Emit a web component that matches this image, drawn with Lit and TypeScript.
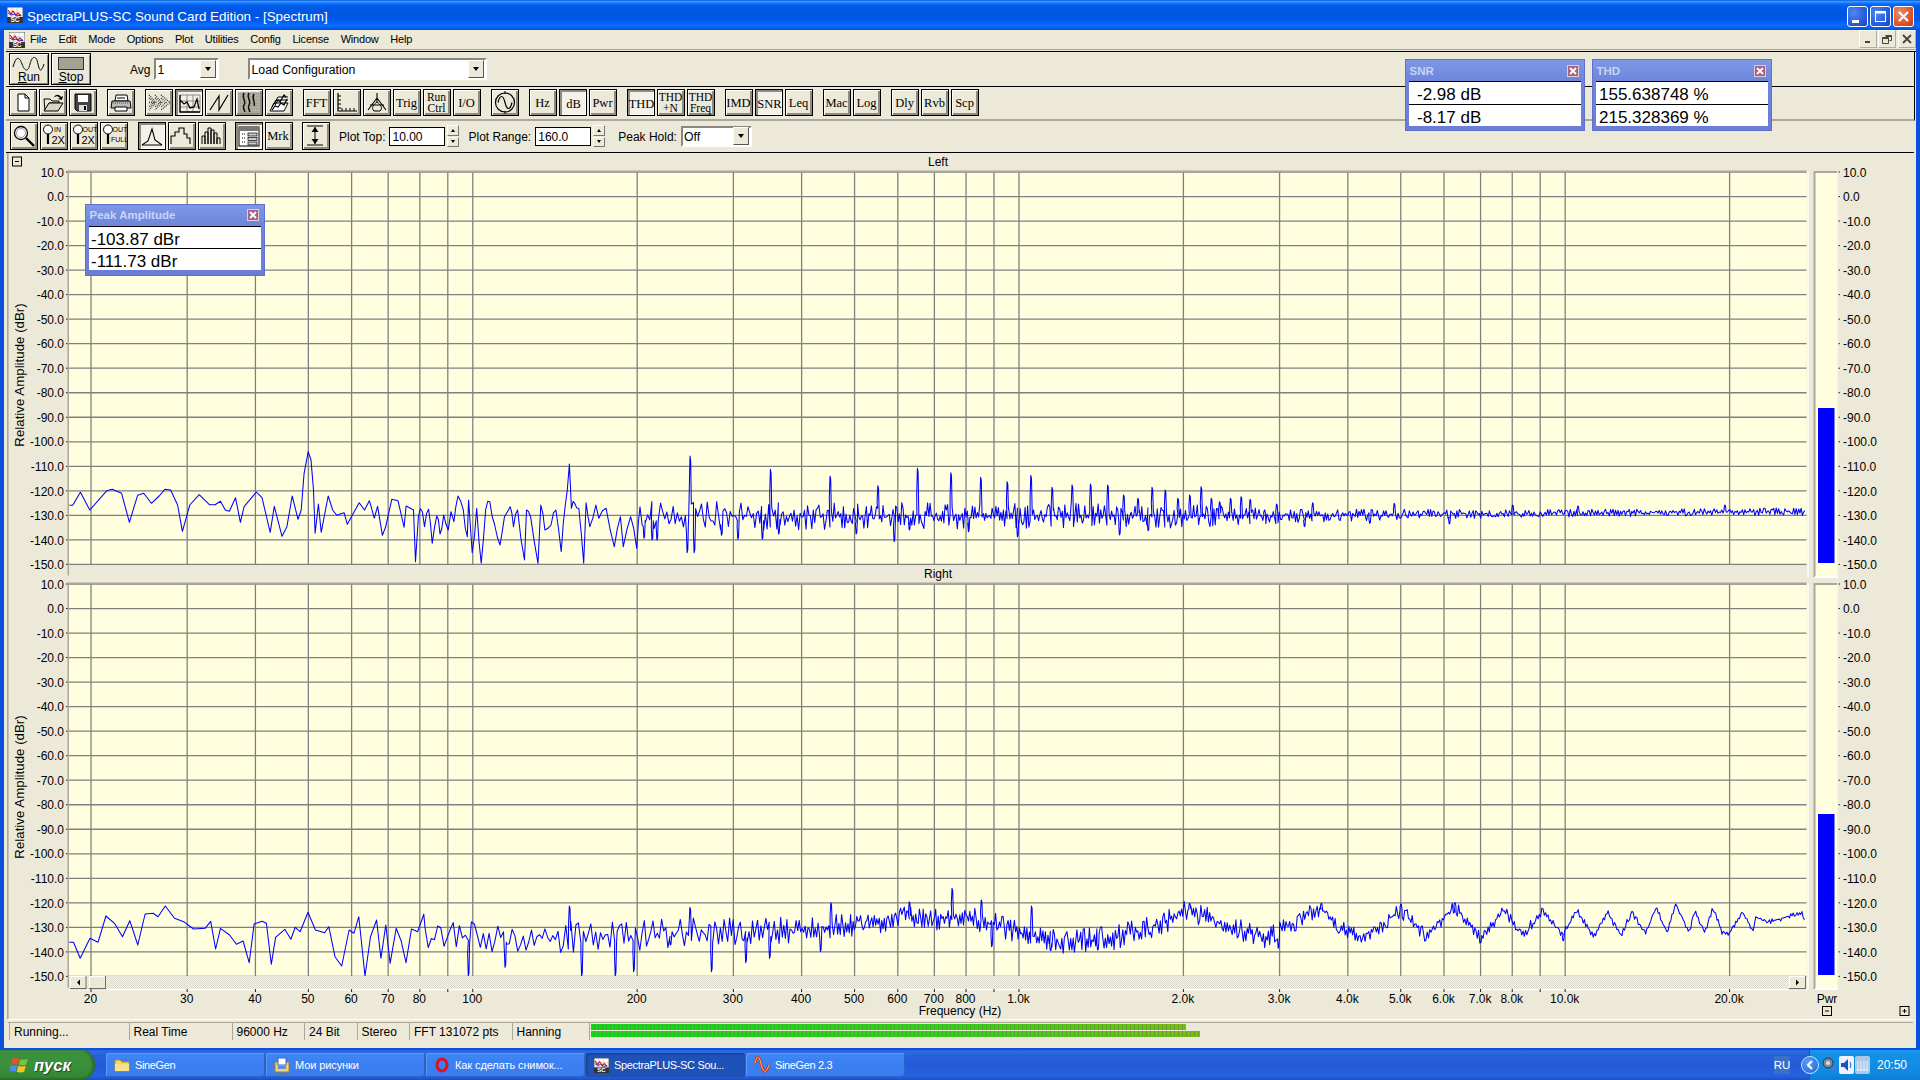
import { LitElement, html, css, svg } from "lit";
import { customElement } from "lit/decorators.js";

function rng(seed: number) {
  let s = seed;
  return () => {
    s = (s * 16807) % 2147483647;
    return (s - 1) / 2147483646;
  };
}
function interp(tbl: number[][], x: number) {
  if (x <= tbl[0][0]) return tbl[0][1];
  for (let i = 1; i < tbl.length; i++) {
    if (x <= tbl[i][0]) {
      const [a, b] = tbl[i - 1];
      const [c, d] = tbl[i];
      return b + ((d - b) * (x - a)) / (c - a);
    }
  }
  return tbl[tbl.length - 1][1];
}

const FX = (f: number) => 91 + 546.2 * Math.log10(f / 20);
const PLOT_L = 69;
const PLOT_R = 1806.5;
const STEP = 2.4525;
const T1 = 172;
const T2 = 584;

const leftLow = [[170,226],[178,226],[197,187],[220,240],[262,182],[275,178],[298,190],[317,277],[337,196],[352,190],[371,220],[390,198],[404,178],[418,180],[435,225],[447,304],[465,225],[488,194],[513,224],[527,224],[540,214],[552,240],[562,244],[577,203],[589,277],[598,230],[628,186],[642,203],[662,307],[672,229],[691,319],[703,290],[716,198],[730,268],[738,240],[745,130],[755,65],[762,90],[768,180],[772,310],[780,222],[787,307],[804,198],[815,240],[825,256],[843,248],[851,283],[880,218],[893,240],[905,212],[917,264],[925,229],[937,316],[945,290],[960,208],[975,212],[990,292],[995,228],[1013,240],[1018,395],[1025,260],[1035,245],[1040,290],[1050,238],[1059,340],[1070,258],[1078,312],[1087,255],[1098,300],[1105,245],[1112,275],[1122,198],[1135,240],[1145,320],[1148,210],[1157,368],[1168,235],[1179,400],[1190,238],[1200,215],[1212,285],[1225,345],[1236,260],[1250,230],[1258,290],[1268,240],[1285,390],[1290,240],[1300,260],[1318,400],[1325,225],[1335,300],[1350,285],[1362,240],[1375,365],[1385,225],[1395,102],[1400,235],[1408,220],[1418,235],[1430,400],[1436,218],[1445,290],[1460,225],[1467,265],[1485,235],[1505,350],[1520,260],[1527,350],[1545,260],[1560,355],[1568,230]];

const leftSpikes: number[][] = [
  ...[[123,78],[320,118],[466,138],[583,167],[680,115],[762,128],[835,142],[900,155],[958,136],[1010,172],[1059,165],[1104,162],[1146,165],[1185,195],[1220,205],[1255,172],[1287,180],[1318,205],[1347,195],[1375,170],[1400,205],[1420,215],[1447,205],[1473,200],[1495,208],[1530,240],[1560,222],[116,368],[133,368],[240,328],[300,328],[340,312],[530,312],[623,335],[925,320],[10,325],[30,330],[42,330],[200,316],[660,300],[805,305],[1175,315],[1245,302]].map(([x, y]) => [640 + x / 2.45, 430 + y / 3]),
  ...[[80,218],[280,220],[570,225],[1090,225],[60,290],[415,282],[220,280],[730,228]].map(([x, y]) => [1280 + x / 2.45, 430 + y / 3]),
];

const rightLow = [[113,187],[120,187],[131,235],[147,175],[160,187],[173,108],[187,130],[200,170],[212,122],[225,195],[237,102],[250,100],[258,110],[270,78],[285,115],[300,125],[316,147],[335,145],[344,124],[352,207],[360,145],[375,165],[386,193],[397,183],[407,248],[415,132],[428,124],[435,130],[443,253],[450,172],[465,148],[475,178],[482,142],[490,155],[503,97],[515,150],[530,158],[537,140],[547,230],[558,258],[570,150],[578,160],[586,110],[596,288],[605,170],[615,120],[622,235],[630,135],[637,250],[647,145],[655,182],[663,248],[672,147],[682,155],[692,103]];

const rightCenter = [[424,925],[428,935],[612,937],[796,930],[918,918],[960,917],[990,923],[1021,933],[1052,942],[1113,938],[1162,923],[1190,910],[1217,923],[1266,938],[1321,908],[1340,928],[1364,938],[1401,910],[1425,935],[1455,907],[1480,938],[1504,910],[1523,935],[1543,910],[1563,935],[1577,910],[1594,937],[1607,912],[1621,935],[1632,912],[1645,933],[1656,907],[1667,932],[1676,905],[1689,932],[1695,912],[1705,933],[1713,908],[1722,932],[1729,933],[1743,912],[1753,932],[1756,917],[1768,922],[1802,913],[1805,924]];

const rightAmp = [[424,16],[700,16],[830,12],[1000,13],[1150,12],[1300,10],[1500,6],[1620,3.2],[1805,2.6]];

const rightSpikes: number[][] = [
  ...[[930,78],[1127,82],[1357,68],[1555,25],[1485,65],[765,288],[950,288],[1005,288],[1035,275],[1162,275],[1218,248],[1257,235],[1340,215],[1095,195],[825,262]].map(([x, y]) => [x / 1.633, 880 + y / 3]),
  ...[[35,60],[117,78],[52,200],[148,212],[225,210],[520,205],[375,70],[590,70],[720,72],[808,68],[850,188],[985,182]].map(([x, y]) => [960 + x / 1.633, 880 + y / 3]),
];

const stepAt = (x: number) => Math.max(1.25, 3.2 - (x - 424) / 220);

function noiseTrace(
  start: number[][],
  spikes: number[][],
  from: number,
  to: number,
  center: (x: number) => number,
  amp: (x: number) => number,
  seed: number,
  minY: number,
  maxY: number,
) {
  const r = rng(seed);
  const pts = start.slice();
  const sp = spikes.slice().sort((a, b) => a[0] - b[0]);
  let si = 0;
  let sign = 1;
  for (let x = from; x < to; x += stepAt(x)) {
    while (si < sp.length && sp[si][0] <= x) {
      const [sx, sy] = sp[si++];
      const c = center(sx);
      pts.push([sx - 0.9, c + (sy - c) * 0.45], [sx - 0.2, sy], [sx + 0.5, sy + (c - sy) * 0.08], [sx + 1.1, c + (sy - c) * 0.2]);
      x = Math.max(x, sx + 1.3);
    }
    if (r() < 0.72) sign = -sign;
    const a = amp(x);
    const m = Math.pow(r(), 1.3);
    const y = center(x) + sign * a * m;
    pts.push([x, Math.min(maxY, Math.max(minY, y))]);
  }
  return pts.map((p) => `${p[0].toFixed(1)},${Math.min(maxY, p[1]).toFixed(1)}`).join(" ");
}

/* the hand-read low end is sparser than the bins above ~120 Hz: add a mid point between far vertices */
function densify(src: number[][], fromX: number, seed: number) {
  const r = rng(seed);
  const out: number[][] = [];
  src.forEach((p, i) => {
    out.push(p);
    const n = src[i + 1];
    if (n && p[0] > fromX && n[0] - p[0] > 3.2) {
      out.push([(p[0] + n[0]) / 2, (p[1] + n[1]) / 2 + (r() - 0.5) * 11]);
    }
  });
  return out;
}

const leftPts = noiseTrace(
  densify(leftLow.map(([x, y]) => [x / 2.45, 430 + y / 3]), 410, 77),
  leftSpikes,
  640,
  1805,
  (x) => interp([[640, 516], [1280, 516], [1450, 514], [1805, 511.5]], x),
  (x) => interp([[640, 15], [1000, 13], [1200, 12], [1280, 7.5], [1420, 5], [1560, 3.8], [1805, 3.8]], x),
  4711,
  172,
  565,
);

const rightPts = noiseTrace(
  rightLow.map(([x, y]) => [x / 1.633, 880 + y / 3]),
  rightSpikes,
  425,
  1805,
  (x) => interp(rightCenter, x),
  (x) => interp(rightAmp, x),
  90210,
  584,
  976,
);

const freqLines: number[] = [];
for (const m of [10, 100, 1000]) for (let d = m === 10 ? 2 : 1; d <= 9; d++) freqLines.push(d * m);
freqLines.push(10000, 20000);
const freqLabels: [number, string][] = [[20,"20"],[30,"30"],[40,"40"],[50,"50"],[60,"60"],[70,"70"],[80,"80"],[100,"100"],[200,"200"],[300,"300"],[400,"400"],[500,"500"],[600,"600"],[700,"700"],[800,"800"],[1000,"1.0k"],[2000,"2.0k"],[3000,"3.0k"],[4000,"4.0k"],[5000,"5.0k"],[6000,"6.0k"],[7000,"7.0k"],[8000,"8.0k"],[10000,"10.0k"],[20000,"20.0k"]];
const dbs: number[] = [];
for (let d = 10; d >= -150; d -= 10) dbs.push(d);

function plot(top: number, name: string, pts: string, bluTop: number) {
  const b = top + 160 * STEP;
  const meterBottom = top === T1 ? 577 : 989;
  const blueBottom = top === T1 ? 563 : 975;
  return svg`
    <rect x="${PLOT_L}" y="${top}" width="${PLOT_R - PLOT_L}" height="${b - top}" fill="#ffffdf"/>
    ${dbs.map((d) => {
      const y = top + (10 - d) * STEP;
      return svg`
        <line x1="${PLOT_L}" x2="${PLOT_R}" y1="${y}" y2="${y}" class="grid"/>
        <line x1="66" x2="69" y1="${y}" y2="${y}" class="tick"/>
        <line x1="1837" x2="1840" y1="${y}" y2="${y}" class="tick"/>
        <text x="64" y="${y + 4.7}" text-anchor="end" class="ax">${d.toFixed(1)}</text>
        <text x="1843" y="${y + 4.7}" class="ax">${d.toFixed(1)}</text>`;
    })}
    ${freqLines.map((f) => svg`<line x1="${FX(f)}" x2="${FX(f)}" y1="${top}" y2="${b}" class="grid"/>`)}
    <polyline points="${pts}" fill="none" stroke="#0000ff" stroke-width="1.05" stroke-linejoin="round"/>
    <rect x="${PLOT_L - 1}" y="${top - 1.5}" width="${PLOT_R - PLOT_L + 1}" height="2" fill="#aca899"/>
    <rect x="${PLOT_L - 1.5}" y="${top - 1.5}" width="1.5" height="${meterBottom - top}" fill="#aca899"/>
    <line x1="1808" x2="1808" y1="${top - 1}" y2="${meterBottom}" stroke="#fff" stroke-width="1.5"/>
    <rect x="1815" y="${top - 1}" width="23" height="${meterBottom - top + 1}" fill="#ffffdf"/>
    <rect x="1815" y="${top - 1}" width="23" height="2" fill="#aca899"/>
    <rect x="1813.5" y="${top - 1}" width="2" height="${meterBottom - top + 1}" fill="#aca899"/>
    <rect x="1815" y="${meterBottom - 1}" width="23" height="2" fill="#fff"/>
    <rect x="1837" y="${top - 1}" width="1.5" height="${meterBottom - top + 1}" fill="#f4f2e6"/>
    <rect x="1818" y="${bluTop}" width="16.5" height="${blueBottom - bluTop}" fill="#0000ff"/>
    <text x="20" y="${top + 203}" transform="rotate(-90 20 ${top + 203})" dy="4" text-anchor="middle" class="axt">Relative Amplitude (dBr)</text>
    <text x="938" y="${top - 6}" text-anchor="middle" class="ax">${name}</text>`;
}

function boxBtn(x: number, y: number, plus: boolean) {
  return svg`<rect x="${x}" y="${y}" width="9" height="9" fill="#ece9d8" stroke="#000" stroke-width="1"/>
    <line x1="${x + 2.5}" x2="${x + 6.5}" y1="${y + 4.5}" y2="${y + 4.5}" stroke="#000"/>
    ${plus ? svg`<line x1="${x + 4.5}" x2="${x + 4.5}" y1="${y + 2.5}" y2="${y + 6.5}" stroke="#000"/>` : ""}`;
}

const sb = (x: number, w: number) => svg`
  <rect x="${x}" y="976" width="${w}" height="13" fill="#ece9d8"/>
  <rect x="${x}" y="976" width="${w}" height="1" fill="#fff"/>
  <rect x="${x}" y="976" width="1" height="13" fill="#fff"/>
  <rect x="${x}" y="988" width="${w}" height="1.2" fill="#716f64"/>
  <rect x="${x + w - 1}" y="976" width="1" height="13" fill="#716f64"/>`;

const chart = svg`
  <svg class="chart" viewBox="4 153 1912 866" width="1912" height="866">
    <defs>
      <pattern id="dith" width="2" height="2" patternUnits="userSpaceOnUse">
        <rect width="2" height="2" fill="#f6f6f2"/><rect width="1" height="1" fill="#d9d7cc"/><rect x="1" y="1" width="1" height="1" fill="#d9d7cc"/>
      </pattern>
    </defs>
    <rect x="7" y="153" width="1.6" height="866" fill="#aca899"/>
    ${boxBtn(12.5, 157, false)}
    ${plot(T1, "Left", leftPts, 408)}
    ${plot(T2, "Right", rightPts, 814)}
    <rect x="${PLOT_L}" y="976" width="${PLOT_R - PLOT_L}" height="13" fill="url(#dith)"/>
    <rect x="${PLOT_L}" y="989" width="${PLOT_R - PLOT_L + 1}" height="1.3" fill="#fff"/>
    ${sb(70, 16.5)}
    <polygon points="80,979.5 80,985.5 77,982.5" fill="#000"/>
    ${sb(89, 17)}
    ${sb(1789, 17)}
    <polygon points="1796,979.5 1796,985.5 1799,982.5" fill="#000"/>
    ${freqLines.map((f) => svg`<line x1="${FX(f)}" x2="${FX(f)}" y1="989" y2="992" class="tick"/>`)}
    ${freqLabels.map(([f, l]) => svg`<text x="${FX(f) - 0.5}" y="1003" text-anchor="middle" class="ax">${l}</text>`)}
    <text x="960" y="1015" text-anchor="middle" class="ax">Frequency (Hz)</text>
    <text x="1827" y="1003" text-anchor="middle" class="ax">Pwr</text>
    ${boxBtn(1822.5, 1006.5, false)}
    ${boxBtn(1900, 1006.5, true)}
  </svg>`;

/* ---------- toolbar icons ---------- */
const I = (c: unknown) => html`<svg class="ic" viewBox="0 0 26 25" width="26" height="25">${c}</svg>`;
const icNew = I(svg`<path d="M8 4h7l4 4v13H8z M15 4v4h4" fill="#fff" stroke="#000"/>`);
const icOpen = I(svg`<path d="M4 9h6l2 2h7v2H9l-4 8z" fill="#ece9d8" stroke="#000"/><path d="M4 21l5-8h14l-5 8z" fill="#d8d5c2" stroke="#000"/><path d="M14 7c2-3 5-3 7 0l2-1-1 4-4-1 2-1c-2-2-4-2-5-1" fill="#000"/>`);
const icSave = I(svg`<path d="M5 4h16v17H7l-2-2z" fill="#444" stroke="#000"/><rect x="8" y="5" width="10" height="7" fill="#fff"/><rect x="9" y="15" width="8" height="6" fill="#ddd"/><rect x="14" y="16" width="2" height="4" fill="#000"/>`);
const icPrint = I(svg`<path d="M8 5h11l1 6H7z" fill="#fff" stroke="#000"/><path d="M4 11h18l1 7H3z" fill="#bbb" stroke="#000"/><path d="M7 17h12v4H7z" fill="#fff" stroke="#000"/><path d="M9 8h8" stroke="#000"/><path d="M5 13h16" stroke="#555" stroke-dasharray="1 1"/>`);
const icFfwd = I(svg`<path d="M3 12.5h5 M3 8l5 4.500L3 17 M3 5l7 7.500L3 20 M9 8l5 4.500L9 17 M9 5l7 7.500L9 20 M15 8l5 4.500-5 4.500 M15 5l9 7.500-9 7.500" fill="none" stroke="#333" stroke-dasharray="1 1" stroke-width="1.3"/>`);
const icSpec = I(svg`<path d="M3 4h20v17H3z M3 10h20 M3 16h20 M10 4v17 M16 4v17" fill="none" stroke="#888"/><path d="M3 4v17h20 M3 9l4 4 3-2 3 6 4-1 3-8 2 10" fill="none" stroke="#000" stroke-width="1.3"/>`);
const icSaw = I(svg`<path d="M4 20L13 6v14L22 5" fill="none" stroke="#000" stroke-width="1.2"/>`);
const icWfall = I(svg`<rect x="2" y="2" width="22" height="21" fill="#b4b1a4"/><path d="M2 4h22M2 7h22M2 10h22M2 13h22M2 16h22M2 19h22M2 22h22" stroke="#8c8a80" stroke-dasharray="1 1"/><path d="M8 3c-3 5 3 8 0 12-1 2 0 5 1 7 M13 3c-3 5 3 8 0 12-1 2 0 5 1 7 M18 4c-3 5 2 8 0 12" fill="none" stroke="#111" stroke-width="1.5"/>`);
const icStack = I(svg`<path d="M4 21l4-8h14l-4 8z M6 17l4-7h12 M8 14l4-7h10" fill="#fff" stroke="#000"/><path d="M6 20l3-4 3 1 3-4 3 2 3-6 M9 15l3-5 2 2 4-7 2 2" fill="none" stroke="#000" stroke-width="1.2"/>`);
const icRuler = I(svg`<path d="M4 3v18h19" fill="none" stroke="#000" stroke-width="1.2"/><path d="M4 6h3M4 10h3M4 14h3M4 18h3M8 21v-3M12 21v-3M16 21v-3M20 21v-3" stroke="#000"/>`);
const icTrip = I(svg`<path d="M13 3v9 M13 8L4 20 M13 8l9 12 M6 15h14" fill="none" stroke="#000" stroke-width="1.1"/><path d="M13 12c-4 3-6 6-3 9h6c3-3 1-6-3-9z" fill="none" stroke="#000"/>`);
const icSine = I(svg`<circle cx="13" cy="12.5" r="9.5" fill="none" stroke="#000" stroke-width="1.2"/><path d="M13 1v3M13 21v3" stroke="#000"/><path d="M6 12.5c2-8 5-8 7 0s5 8 7 0" fill="none" stroke="#000" stroke-width="1.2"/>`);
const icMag = I(svg`<circle cx="10" cy="10" r="6.5" fill="#fff" stroke="#000" stroke-width="1.3"/><circle cx="10" cy="10" r="4.5" fill="none" stroke="#999"/><path d="M15 15l8 8" stroke="#000" stroke-width="2.4"/>`);
const smallMag = svg`<circle cx="7" cy="6.5" r="4.5" fill="#fff" stroke="#000"/><path d="M7 11v10" stroke="#000" stroke-width="2.2"/>`;
const icIn = I(svg`${smallMag}<text x="13" y="9" class="tiny">IN</text><text x="10.5" y="21" class="bigt">2X</text>`);
const icOut = I(svg`${smallMag}<text x="11.5" y="9" class="tiny">OUT</text><text x="10.5" y="21" class="bigt">2X</text>`);
const icFull = I(svg`${smallMag}<text x="11.5" y="9" class="tiny">OUT</text><text x="10" y="19" class="tiny">FULL</text>`);
const icPeak = I(svg`<path d="M3 21l6-4 4-12 3 11 7 5" fill="none" stroke="#000" stroke-width="1.1"/><path d="M3 21h20" stroke="#000"/>`);
const icStep = I(svg`<path d="M3 21v-8h4V9h4V5h5v6h3v4h3v6" fill="none" stroke="#000" stroke-width="1.1"/>`);
const icBars = I(svg`<path d="M4 21v-8h3v8 M7 21V9h3v12 M10 21V5h3v16 M13 21V7h3v14 M16 21V10h3v11 M19 21v-6h3v6" fill="none" stroke="#000"/>`);
const icTable = I(svg`<rect x="3" y="3" width="20" height="19" fill="#fff" stroke="#000"/><rect x="3" y="3" width="20" height="4" fill="#777"/><path d="M6 10h4M6 14h4M6 18h4" stroke="#000" stroke-dasharray="1 1"/><rect x="12" y="9" width="9" height="3" fill="#ccc" stroke="#000" stroke-width=".7"/><rect x="12" y="13.5" width="9" height="3" fill="#ccc" stroke="#000" stroke-width=".7"/><rect x="12" y="18" width="9" height="3" fill="#ccc" stroke="#000" stroke-width=".7"/>`);
const icHeight = I(svg`<path d="M5 3h16M5 22h16" stroke="#000" stroke-width="1.2"/><path d="M13 4v17" stroke="#000"/><path d="M13 4l-3.5 5h7zM13 21l-3.5-5h7z" fill="#000"/>`);

type B = { i?: unknown; t?: string; t2?: string; p?: boolean };
const row2: B[][] = [
  [{ i: icNew }, { i: icOpen }, { i: icSave }],
  [{ i: icPrint }],
  [{ i: icFfwd }, { i: icSpec, p: true }, { i: icSaw }, { i: icWfall }, { i: icStack }],
  [{ t: "FFT" }, { i: icRuler }, { i: icTrip }, { t: "Trig" }, { t: "Run", t2: "Ctrl" }, { t: "I/O" }],
  [{ i: icSine }],
  [{ t: "Hz" }, { t: "dB", p: true }, { t: "Pwr" }],
  [{ t: "THD", p: true }, { t: "THD", t2: "+N" }, { t: "THD", t2: "Freq" }],
  [{ t: "IMD" }, { t: "SNR", p: true }, { t: "Leq" }],
  [{ t: "Mac" }, { t: "Log" }],
  [{ t: "Dly" }, { t: "Rvb" }, { t: "Scp" }],
];
const row3: B[][] = [
  [{ i: icMag }, { i: icIn }, { i: icOut }, { i: icFull }],
  [{ i: icPeak, p: true }, { i: icStep }, { i: icBars }],
  [{ i: icTable, p: true }, { t: "Mrk" }],
];

const btn = (b: B) => html`<div class="tb ${b.p ? "down" : ""}">
  ${b.i ?? ""}${b.t2
    ? html`<div class="two"><span>${b.t}</span><span>${b.t2}</span></div>`
    : b.t
      ? html`<span class="one">${b.t}</span>`
      : ""}
</div>`;
const groups = (g: B[][]) => g.map((x) => html`<div class="grp">${x.map(btn)}</div>`);

const appIcon = (s: number) => html`<svg width="${s}" height="${s}" viewBox="0 0 16 16">
  <rect width="16" height="16" fill="#fff" stroke="#555"/>
  <path d="M0 5h16M0 9h16M5 0v10M10 0v10" stroke="#bbb" stroke-width=".6"/>
  <path d="M1 3l3 4 2-3 3 4 2-2 3 3" fill="none" stroke="#d11" stroke-width="1.2"/>
  <path d="M1 6l3 2 3-1 3 2 4-1" fill="none" stroke="#22c" stroke-width="1"/>
  <rect x="0" y="10" width="16" height="6" fill="#333"/>
  <text x="8" y="15.4" text-anchor="middle" font-size="6.5" font-weight="700" fill="#fff" font-family="Liberation Sans">SC</text>
</svg>`;

const menu = ["File", "Edit", "Mode", "Options", "Plot", "Utilities", "Config", "License", "Window", "Help"];
const status: [string, number][] = [["Running...", 118], ["Real Time", 101.5], ["96000 Hz", 71], ["24 Bit", 51], ["Stereo", 51], ["FFT 131072 pts", 101], ["Hanning", 75]];

@customElement("meter-panel")
class MeterPanel extends LitElement {
  static properties = { label: {}, a: {}, b: {}, indent: { type: Number } };
  label = "";
  a = "";
  b = "";
  static styles = css`
    :host { display: block; width: 180px; height: 72px; box-sizing: border-box; background: linear-gradient(#7e98e6, #6f86dc 28%, #6a7dd6); border: 1px solid #5f70cf; padding: 0 3px 4px 3px; font-family: "Liberation Sans", Arial, sans-serif; }
    .head { height: 21px; display: flex; align-items: center; justify-content: space-between; padding-right: 1px; }
    .name { color: #c6d5f6; font-size: 11.5px; font-weight: 700; padding-left: 0.5px; }
    .x { width: 12px; height: 12px; box-sizing: border-box; background: #a8607f; border: 1px solid #e0cdd8; display: flex; align-items: center; justify-content: center; margin-right: 1px; }
    .v { background: #fff; border-top: 1.5px solid #000; height: 21.5px; box-sizing: content-box; font-size: 17px; line-height: 26px; color: #000; white-space: nowrap; overflow: hidden; }
    .v + .v { height: 21px; }
  `;
  render() {
    const pad = Number((this as any).indent ?? 0);
    return html`<div class="head"><span class="name">${this.label}</span>
        <span class="x"><svg width="8" height="8" viewBox="0 0 8 8"><path d="M1 1l6 6M7 1L1 7" stroke="#fff" stroke-width="2"/></svg></span></div>
      <div class="v" style="padding-left:${pad}px">${this.a}</div>
      <div class="v" style="padding-left:${pad}px">${this.b}</div>`;
  }
}
void MeterPanel;

@customElement("app-root")
export class AppRoot extends LitElement {
  static styles = css`
    :host { display: block; width: 1920px; height: 1080px; overflow: hidden; background: #ece9d8; font-family: "Liberation Sans", Arial, sans-serif; color: #000; }
    * { box-sizing: border-box; }
    .title { height: 30px; display: flex; align-items: center; padding-left: 7px; gap: 3px; color: #fff; font-size: 13.4px; background: linear-gradient(180deg, #0a58d8 0%, #3a96ff 5%, #1c82ff 9%, #0569f5 14%, #0059e6 24%, #0055e3 55%, #005af0 68%, #0a6cff 84%, #0060ee 93%, #004fcf 100%); }
    .title .txt { padding-left: 1px; padding-top: 3px; }
    .caps { margin-left: auto; display: flex; gap: 2px; padding-right: 6px; padding-top: 2px; }
    .cap { width: 21px; height: 21px; border: 1px solid #fff; border-radius: 3px; background: radial-gradient(circle at 30% 30%, #4f86f0, #2356d8 70%, #1d46b8); position: relative; display: flex; }
    .cap.close { background: radial-gradient(circle at 30% 30%, #ee8a68, #dc4d22 70%, #b9350f); }
    .cap svg { margin: auto; }
    .frame { height: 1020px; border: solid #0a52dd; border-width: 0 4px 2px 4px; background: #ece9d8; display: flex; flex-direction: column; }
    .menu { height: 20px; display: flex; align-items: center; font-size: 11px; }
    .menu .mi { display: flex; align-items: center; padding-left: 5px; gap: 11.7px; flex: 1; letter-spacing: -0.2px; }
    .menu .mi svg { margin-right: -6.8px; }
    .menu .mi span { padding-bottom: 2px; }
    .mdi { display: flex; gap: 1.5px; padding-right: 0.5px; height: 19px; }
    .mb { width: 18px; height: 18px; background: #ece9d8; border: 1px solid; border-color: #fff #b0ad9f #b0ad9f #fff; display: flex; align-items: center; justify-content: center; }
    .tools { position: relative; margin-left: 2px; margin-top: 0; }
    .topline { height: 3px; border-top: 1px solid #aca899; border-bottom: 1px solid #000; margin-left: 2px; }
    .r1 { height: 35px; border-bottom: 1px solid #000; border-right: 1px solid #000; margin-right: 1px; padding-left: 3px; display: flex; align-items: center; margin-top: 0; }
    .big { width: 40px; height: 32px; border: 1px solid #000; background: #ece9d8; box-shadow: inset 1px 1px 0 #fff, inset -1px -1px 0 #808080; display: flex; flex-direction: column; align-items: center; font-size: 12px; margin-right: 2px; line-height: 11px; }
    .big svg { flex: none; margin-top: 3px; margin-bottom: 1px; }
    .big .st { margin-top: 3px; margin-bottom: 1px; }
    .u { text-decoration: underline; }
    .lab { font-size: 12px; white-space: nowrap; padding-top: 1px; }
    .combo { display: flex; height: 22px; background: #fff; border: 2px solid; border-color: #8a887c #fff #fff #8a887c; font-size: 12.3px; align-items: center; justify-content: space-between; }
    .combo > span { padding-top: 1px; padding-left: 1px; }
    .arrow { width: 16px; height: 18px; background: #ece9d8; border: 1px solid; border-color: #fff #555 #555 #fff; display: flex; align-items: center; justify-content: center; margin-right: 1px; }
    .arrow::after { content: ""; border: solid transparent; border-width: 4px 3.5px 0; border-top-color: #000; }
    .avg { width: 65px; margin-left: 4px; }
    .cfg { width: 239px; margin-left: 29px; }
    .r2 { height: 34px; border-bottom: 2px solid #aca899; border-right: 1px solid #000; margin-right: 1px; padding-left: 3px; padding-top: 2px; display: flex; gap: 10px; align-items: flex-start; }
    .r3 { height: 32px; border-bottom: 1px solid #000; margin-right: 2px; padding-left: 4px; padding-top: 1px; display: flex; gap: 9px; align-items: flex-start; }
    .r3 .grp:first-child { margin-right: 0.5px; }
    .r3 .ctl { margin-left: -0.5px; }
    .grp { display: flex; gap: 2px; }
    .tb { width: 28px; height: 27px; flex: none; border: 1px solid #000; background: #ece9d8; box-shadow: inset 1px 1px 0 #fff, inset -2px -2px 0 #8e8c80; display: flex; align-items: center; justify-content: center; font-family: "Liberation Serif", serif; font-size: 12.5px; padding: 0 1px 1px 0; overflow: hidden; white-space: nowrap; }
    .r3 .tb { height: 28px; }
    .tb.down { background: #f4f2e8; box-shadow: inset 2px 2px 0 #8e8c80, inset -1px -1px 0 #fff; padding: 1px 0 0 1px; }
    .tb .one { padding-top: 2.5px; }
    .two { display: flex; flex-direction: column; align-items: center; line-height: 10.5px; font-size: 11.5px; padding-top: 1.5px; }
    .ic { flex: none; }
    .ic .tiny { font: 7px "Liberation Sans", sans-serif; }
    .ic .bigt { font: 11px "Liberation Sans", sans-serif; }
    .plab { font-size: 12px; white-space: nowrap; padding-top: 2px; }
    .inp { height: 19px; background: #fff; border: 1px solid #000; font-size: 12px; padding: 1px 0 0 2px; display: flex; align-items: center; }
    .spin { width: 12px; height: 22px; display: flex; flex-direction: column; gap: 1px; margin-left: 2px; }
    .spin i { flex: 1; background: #ece9d8; border: 1px solid; border-color: #fff #777 #777 #fff; display: flex; align-items: center; justify-content: center; }
    .spin i::after { content: ""; border: solid transparent; border-width: 0 2.5px 3px; border-bottom-color: #000; }
    .spin i + i::after { border-width: 3px 2.5px 0; border-top-color: #000; border-bottom-color: transparent; }
    .ctl { display: flex; align-items: center; height: 28px; }
    .ctl .plab:first-child { margin-left: 1px; }
    .iw { width: 56px; margin-left: 4px; }
    .m9 { margin-left: 9px; }
    .m13 { margin-left: 13px; }
    .off { width: 71px; margin-left: 4px; height: 21px; }
    .avglab { margin-left: 37px; }
    .snr { position: absolute; left: 1399px; top: 7px; }
    .thd { position: absolute; left: 1586px; top: 7px; }
    .chartwrap { position: relative; height: 866px; }
    .chart { display: block; }
    .chart .grid { stroke: #808080; stroke-width: 1.3; }
    .chart .tick { stroke: #222; stroke-width: 1; }
    .chart .ax { font: 12px "Liberation Sans", Arial, sans-serif; fill: #000; }
    .chart .axt { font: 13.3px "Liberation Sans", Arial, sans-serif; fill: #000; }
    .peak { position: absolute; left: 81px; top: 50.5px; }
    .divider { height: 4px; border-bottom: 1px solid #aca899; border-top: 1px solid #fff; margin: 0 3px 0 4px; }
    .status { height: 17px; display: flex; font-size: 12px; padding-left: 5px; gap: 1.5px; margin-bottom: 8px; }
    .cell { height: 17px; border-left: 1px solid #aca899; padding: 1px 0 0 4px; display: flex; align-items: center; white-space: nowrap; }
    .lev { flex: 1; border-left: 1px solid #aca899; padding: 1px 0 0 1px; display: flex; flex-direction: column; gap: 1px; margin-left: 1px; }
    .lev i { display: block; height: 6px; background: repeating-linear-gradient(90deg, transparent 0 3px, rgba(110, 110, 110, 0.5) 3px 4px), linear-gradient(90deg, #00e600, #22de00 60%, #74c400); }
    .task { height: 30px; display: flex; align-items: center; color: #fff; font-size: 11px; background: linear-gradient(180deg, #2a63d8 0%, #2f6ae0 8%, #2660dc 18%, #245ad8 50%, #2562df 86%, #2158d4 93%, #1d4ebd 100%); position: relative; }
    .start { width: 95px; height: 30px; flex: none; border-radius: 0 13px 13px 0 / 0 15px 15px 0; background: linear-gradient(180deg, #4a9a4a, #3c923c 12%, #3a8f3a 60%, #348734 88%, #2b6f2b); display: flex; align-items: center; padding-left: 10px; gap: 4px; font-style: italic; font-weight: 700; font-size: 16.5px; box-shadow: inset -2px 0 3px #2a622a; text-shadow: 1px 1px 1px #1a4a1a; }
    .tasks { display: flex; gap: 1.5px; margin-left: 11px; }
    .tk { width: 158.5px; height: 24px; border-radius: 3px; background: linear-gradient(#4188f4, #3c81f3 30%, #3a7cf0); display: flex; align-items: center; padding-left: 8px; gap: 5px; white-space: nowrap; overflow: hidden; box-shadow: inset 1px 1px 0 #5a9af8, inset -1px -1px 0 #2c63c8; }
    .tk.on { background: #1e52b7; box-shadow: inset 1px 1px 2px #163e8c; }
    .tk .lat { letter-spacing: -0.35px; }
    .tk .cyr { letter-spacing: -0.1px; }
    .ru { margin-left: auto; width: 16px; height: 18px; margin-right: 19px; background: #3c6fc8; display: flex; align-items: center; justify-content: center; font-size: 11.5px; }
    .tray { width: 111px; height: 30px; flex: none; background: linear-gradient(#1b97ec, #1290e8 15%, #0f8ae2 75%, #0d7cd4); border-left: 1px solid #0d5cc0; display: flex; align-items: center; position: relative; font-size: 12px; }
    .chev { width: 18px; height: 18px; border-radius: 50%; margin-left: -9.5px; background: radial-gradient(circle at 40% 35%, #5aa4f4, #1c5fd4); border: 1px solid #cfe3ff; display: flex; align-items: center; justify-content: center; flex: none; }
    .tray .clock { margin-left: auto; padding-right: 13px; }
    .ticons { display: flex; gap: 1px; margin-left: 3px; align-items: center; }
  `;

  render() {
    return html`
      <div class="title">
        ${appIcon(16)}<span class="txt">SpectraPLUS-SC Sound Card Edition - [Spectrum]</span>
        <div class="caps">
          <div class="cap"><svg width="19" height="19" viewBox="0 0 19 19"><rect x="4" y="13" width="7" height="3" fill="#fff"/></svg></div>
          <div class="cap"><svg width="19" height="19" viewBox="0 0 19 19"><rect x="4.500" y="4.500" width="10" height="10" fill="none" stroke="#fff"/><rect x="4" y="4" width="11" height="2.500" fill="#fff"/></svg></div>
          <div class="cap close"><svg width="19" height="19" viewBox="0 0 19 19"><path d="M5 5l9 9M14 5l-9 9" stroke="#fff" stroke-width="2.200"/></svg></div>
        </div>
      </div>
      <div class="frame">
        <div class="menu">
          <div class="mi">${appIcon(16)}${menu.map((m) => html`<span>${m}</span>`)}</div>
          <div class="mdi">
            <div class="mb"><svg width="10" height="10" viewBox="0 0 10 10"><rect x="2" y="7" width="5" height="2" fill="#444"/></svg></div>
            <div class="mb"><svg width="10" height="10" viewBox="0 0 10 10"><path d="M3.500 1.500h6v5h-2 M.5 3.500h6v6h-6z M.5 4.500h6 M3.500 2.500h6" fill="none" stroke="#444"/></svg></div>
            <div class="mb"><svg width="10" height="10" viewBox="0 0 10 10"><path d="M1 1l8 8M9 1L1 9" stroke="#444" stroke-width="1.800"/></svg></div>
          </div>
        </div>
        <div class="topline"></div>
        <div class="tools">
          <div class="r1">
            <div class="big"><svg width="34" height="14" viewBox="0 0 34 14"><path d="M1 10C4-1 7-1 10 7s6 8 8 0 6-10 8 0 4 6 6 0" fill="none" stroke="#000"/></svg><span><span class="u">R</span>un</span></div>
            <div class="big"><svg class="st" width="26" height="14" viewBox="0 0 26 14"><rect x=".5" y=".5" width="25" height="12" fill="#a5a294" stroke="#333"/></svg><span><span class="u">S</span>top</span></div>
            <span class="lab avglab">Avg</span>
            <div class="combo avg"><span>1</span><div class="arrow"></div></div>
            <div class="combo cfg"><span>Load Configuration</span><div class="arrow"></div></div>
          </div>
          <div class="r2">${groups(row2)}</div>
          <div class="r3">
            ${groups(row3)}
            <div class="grp">${btn({ i: icHeight })}</div>
            <div class="ctl">
              <span class="plab">Plot Top:</span>
              <div class="inp iw">10.00</div>
              <div class="spin"><i></i><i></i></div>
              <span class="plab m9">Plot Range:</span>
              <div class="inp iw">160.0</div>
              <div class="spin"><i></i><i></i></div>
              <span class="plab m13">Peak Hold:</span>
              <div class="combo off"><span>Off</span><div class="arrow"></div></div>
            </div>
          </div>
          <meter-panel class="snr" label="SNR" a="-2.98 dB" b="-8.17 dB" indent="8"></meter-panel>
          <meter-panel class="thd" label="THD" a="155.638748 %" b="215.328369 %" indent="3"></meter-panel>
        </div>
        <div class="chartwrap">
          ${chart}
          <meter-panel class="peak" label="Peak Amplitude" a="-103.87 dBr" b="-111.73 dBr" indent="2"></meter-panel>
        </div>
        <div class="divider"></div>
        <div class="status">
          ${status.map(([t, w]) => html`<div class="cell" style="width:${w}px">${t}</div>`)}
          <div class="lev"><i style="width:595px"></i><i style="width:609px"></i></div>
        </div>
      </div>
      <div class="task">
        <div class="start">
          <svg width="20" height="18" viewBox="0 0 24 21"><path d="M3 3c3-2 5-1 8 0l-2 7C6 9 4 9 1 10z" fill="#e8502a"/><path d="M12.500 3.500c3 1 5 1 9-.5l-2 7c-3 1.500-6 1-9 0z" fill="#7dc242"/><path d="M.7 11.500c3-1 5-1 8 0l-2 7c-3-1-5-1-8 0z" fill="#4a8ef0"/><path d="M10 11.500c3 1 6 1.500 9 0l-2 7c-3 1.500-6 1-9 0z" fill="#f7c325"/></svg>
          <span>пуск</span>
        </div>
        <div class="tasks">
          <div class="tk"><svg width="16" height="16" viewBox="0 0 16 16"><path d="M1 3h5l2 2h7v9H1z" fill="#f5d470" stroke="#b8902c"/><path d="M1 7h14v7H1z" fill="#fbe08a"/></svg><span class="lat">SineGen</span></div>
          <div class="tk"><svg width="16" height="16" viewBox="0 0 16 16"><path d="M1 5h14v10H1z" fill="#f3cf6e" stroke="#a8802a"/><rect x="4" y="1" width="8" height="7" fill="#fff" stroke="#3a66c8"/><rect x="4" y="9" width="8" height="3" fill="#5a8cf0"/></svg><span class="cyr">Мои рисунки</span></div>
          <div class="tk"><svg width="16" height="16" viewBox="0 0 16 16"><ellipse cx="8" cy="8" rx="5" ry="6" fill="none" stroke="#e0101c" stroke-width="3"/></svg><span class="cyr">Как сделать снимок...</span></div>
          <div class="tk on">${appIcon(15)}<span class="lat">SpectraPLUS-SC Sou...</span></div>
          <div class="tk"><svg width="16" height="18" viewBox="0 0 16 18"><path d="M1 7c2-8 4-8 6 1s5 10 8 1" fill="none" stroke="#e01818" stroke-width="2.400"/><path d="M1 7c2-8 4-8 6 1s5 10 8 1" fill="none" stroke="#f7e030" stroke-width="1"/></svg><span class="lat">SineGen 2.3</span></div>
        </div>
        <div class="ru">RU</div>
        <div class="tray">
          <div class="chev"><svg width="8" height="10" viewBox="0 0 8 10"><path d="M6 1L2 5l4 4" fill="none" stroke="#fff" stroke-width="2"/></svg></div>
          <div class="ticons">
            <svg width="16" height="18" viewBox="0 0 16 18"><circle cx="6" cy="7" r="5" fill="#7a8aa0" stroke="#333"/><circle cx="6" cy="7" r="2" fill="#ddd"/><path d="M10 15l4-5" stroke="#6a6ad8" stroke-width="2"/></svg>
            <svg width="15" height="18" viewBox="0 0 15 18"><rect width="15" height="18" rx="2" fill="#eef4ff"/><path d="M2 7h3l4-4v12l-4-4H2z" fill="#1a4fc8"/><path d="M11 6c1 2 1 4 0 6" fill="none" stroke="#1a4fc8"/></svg>
            <svg width="15" height="18" viewBox="0 0 15 18"><rect width="15" height="18" rx="2" fill="#a9c8ea"/><path d="M3 15V5M6 15V5M9 15V5M12 15V5M2 14h11" stroke="#eaf3ff"/></svg>
          </div>
          <span class="clock">20:50</span>
        </div>
      </div>
    `;
  }
}
